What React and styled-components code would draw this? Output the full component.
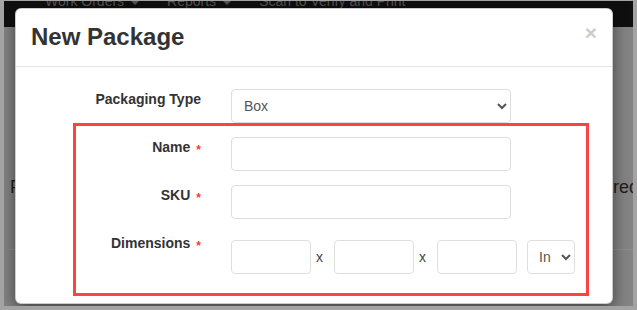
import React from "react";
import styled, { createGlobalStyle } from "styled-components";

const GlobalStyle = createGlobalStyle`
  html, body {
    margin: 0;
    padding: 0;
    background: #a3a3a3;
    font-family: "Liberation Sans", Arial, sans-serif;
  }
`;

const Frame = styled.div`
  width: 637px;
  height: 310px;
  box-sizing: border-box;
  padding: 1px 4px 4px 4px;
  background: #a3a3a3;
`;

const Viewport = styled.div`
  position: relative;
  width: 629px;
  height: 305px;
  overflow: hidden;
  background: #838383;
`;

const Navbar = styled.div`
  height: 26px;
  background: #0f0f0f;
  display: flex;
  align-items: flex-start;
  padding-left: 41px;
  overflow: hidden;
`;

const NavItem = styled.div`
  display: flex;
  align-items: center;
  gap: 7px;
  margin-top: -7px;
  margin-right: ${(p) => p.gap || 0}px;
  font-size: 14px;
  line-height: 14px;
  color: #545454;
  white-space: nowrap;
`;

const Caret = styled.span`
  width: 0;
  height: 0;
  border-top: 4px solid #545454;
  border-left: 4px solid transparent;
  border-right: 4px solid transparent;
  margin-top: 4px;
`;

const PageBody = styled.div`
  padding: 150px 0 0 6px;
`;

const PageLine = styled.div`
  display: flex;
  font-size: 18px;
  line-height: 20px;
  color: #1d1d1d;
  white-space: nowrap;
  padding-bottom: 52px;
  border-bottom: 1px solid #8f8f8f;
`;

const PageWord = styled.span`
  flex: none;
  width: ${(p) => p.w || "auto"};
`;

const Modal = styled.div`
  position: absolute;
  left: 11px;
  top: 7px;
  width: 598px;
  height: 296px;
  box-sizing: border-box;
  background: #fff;
  border: 1px solid rgba(0, 0, 0, 0.2);
  border-radius: 6px;
  box-shadow: 0 5px 15px rgba(0, 0, 0, 0.5);
  overflow: hidden;
`;

const Header = styled.div`
  display: flex;
  justify-content: space-between;
  align-items: flex-start;
  padding: 15px 15px 16px 15px;
  border-bottom: 1px solid #e5e5e5;
`;

const Title = styled.h4`
  margin: 0;
  font-size: 24px;
  line-height: 26px;
  font-weight: 700;
  color: #333;
`;

const Close = styled.span`
  font-size: 21px;
  line-height: 21px;
  font-weight: 700;
  color: #000;
  opacity: 0.2;
  margin-top: -2px;
`;

const Body = styled.div`
  padding: 22px 15px 0 15px;
`;

const Row = styled.div`
  display: flex;
  align-items: flex-start;
  gap: 30px;
  margin-bottom: ${(p) => p.mb ?? 14}px;
`;

const Label = styled.label`
  width: ${(p) => p.w}px;
  flex: none;
  text-align: right;
  font-size: 14px;
  line-height: 20px;
  font-weight: 700;
  color: #333;
`;

const Req = styled.span`
  color: #f03c3c;
  font-size: 12px;
  margin-left: 6px;
  position: relative;
  top: 2px;
`;

const TextInput = styled.input`
  width: ${(p) => p.w || 280}px;
  height: 34px;
  box-sizing: border-box;
  border: 1px solid #dedede;
  border-radius: 4px;
  padding: 6px 12px;
  font-family: "Liberation Sans", Arial, sans-serif;
  font-size: 14px;
  color: #555;
  background: #fff;
  outline: none;
`;

const Select = styled.select`
  width: ${(p) => p.w || 280}px;
  height: 34px;
  box-sizing: border-box;
  border: 1px solid #dedede;
  border-radius: 4px;
  padding: 6px ${(p) => p.pr ?? 12}px 6px ${(p) => p.pl ?? 8}px;
  margin-left: ${(p) => p.ml || 0}px;
  font-family: "Liberation Sans", Arial, sans-serif;
  font-size: 14px;
  color: #555;
  background: #fff;
  outline: none;
`;

const Highlight = styled.div`
  margin-left: 42px;
  width: 516px;
  box-sizing: border-box;
  border: 3px solid #fb4343;
  padding: 11px 0 19px 0;
`;

const DimGroup = styled.div`
  display: flex;
  align-items: center;
  margin-top: 7px;
`;

const Times = styled.span`
  font-size: 14px;
  color: #444;
  margin: 0 11px 0 5px;
  line-height: 20px;
`;

export default function App() {
  return (
    <>
      <GlobalStyle />
      <Frame>
        <Viewport>
          <Navbar>
            <NavItem gap={28}>
              Work Orders <Caret />
            </NavItem>
            <NavItem gap={28}>
              Reports <Caret />
            </NavItem>
            <NavItem>Scan to Verify and Print</NavItem>
          </Navbar>
          <PageBody>
            <PageLine>
              <PageWord w="603px">F</PageWord>
              <PageWord>required</PageWord>
            </PageLine>
          </PageBody>

          <Modal>
            <Header>
              <Title>New Package</Title>
              <Close>×</Close>
            </Header>
            <Body>
              <Row mb={0}>
                <Label w={170}>Packaging Type</Label>
                <Select defaultValue="box">
                  <option value="box">Box</option>
                  <option value="envelope">Envelope</option>
                </Select>
              </Row>
              <Highlight>
                <Row>
                  <Label w={125}>
                    Name<Req>*</Req>
                  </Label>
                  <TextInput />
                </Row>
                <Row>
                  <Label w={125}>
                    SKU<Req>*</Req>
                  </Label>
                  <TextInput />
                </Row>
                <Row mb={0}>
                  <Label w={125}>
                    Dimensions<Req>*</Req>
                  </Label>
                  <DimGroup>
                    <TextInput w={80} />
                    <Times>x</Times>
                    <TextInput w={80} />
                    <Times>x</Times>
                    <TextInput w={80} />
                    <Select w={48} pl={7} pr={4} ml={10} defaultValue="in">
                      <option value="in">In</option>
                      <option value="cm">Cm</option>
                    </Select>
                  </DimGroup>
                </Row>
              </Highlight>
            </Body>
          </Modal>
        </Viewport>
      </Frame>
    </>
  );
}
